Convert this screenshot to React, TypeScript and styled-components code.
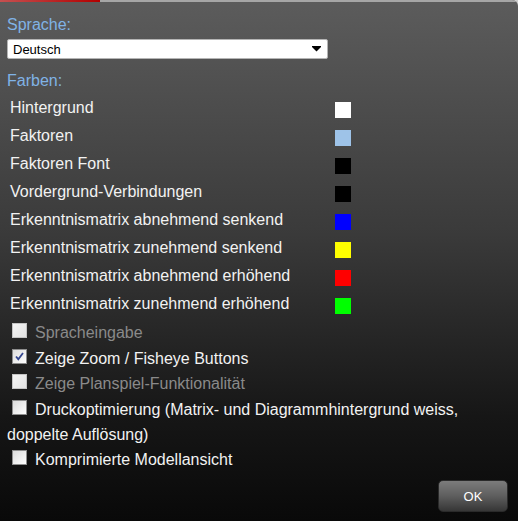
import React from 'react';
import styled, { createGlobalStyle } from 'styled-components';

const GlobalStyle = createGlobalStyle`
  html, body {
    margin: 0;
    padding: 0;
    background: #cfcfcf;
  }
  body {
    font-family: Arial, 'Liberation Sans', sans-serif;
  }
`;

const Panel = styled.div`
  width: 518px;
  height: 521px;
  display: flex;
  flex-direction: column;
  border-top-right-radius: 6px;
  overflow: hidden;
  background: linear-gradient(to bottom, #5c5c5c 0%, #3a3a3a 45%, #161616 80%, #090909 100%);
  color: #f2f2f2;
`;

const TopBar = styled.div`
  height: 2px;
  display: flex;
  background: #a6a6a6;
`;

const Progress = styled.div`
  width: 100px;
  background: linear-gradient(to right, #c55050, #b30000);
`;

const Content = styled.div`
  padding: 14px 7px 0 7px;
  display: flex;
  flex-direction: column;
`;

const SectionLabel = styled.div`
  font-size: 16px;
  line-height: 18px;
  color: #80b3e6;
  margin-bottom: 5px;
`;

const Select = styled.div`
  width: 321px;
  height: 20px;
  box-sizing: border-box;
  border: 1px solid #b4b4b4;
  border-radius: 2px;
  background: #fff;
  color: #000;
  font-size: 13px;
  display: flex;
  align-items: center;
  justify-content: space-between;
  padding: 0 6px 0 5px;
  margin-bottom: 13px;
`;

const ColorList = styled.div`
  display: flex;
  flex-direction: column;
  margin-top: -1px;
`;

const ColorRow = styled.div`
  display: grid;
  grid-template-columns: 325px 16px;
  height: 28px;
  line-height: 28px;
  font-size: 16px;
  padding-left: 3px;
`;

const Swatch = styled.span<{ $color: string }>`
  width: 16px;
  height: 16px;
  margin-top: 8px;
  background: ${(p) => p.$color};
`;

const Options = styled.div`
  margin-top: 2px;
  font-size: 16px;
  line-height: 25px;
`;

const Option = styled.div<{ $disabled?: boolean }>`
  margin-bottom: 0.5px;
  color: ${(p) => (p.$disabled ? '#8a8a8a' : '#f2f2f2')};
`;

const Box = styled.span<{ $disabled?: boolean }>`
  display: inline-block;
  width: 15px;
  height: 15px;
  box-sizing: border-box;
  margin: 0 8px 0 5px;
  vertical-align: baseline;
  border: 1px solid ${(p) => (p.$disabled ? '#c4c4c4' : '#8e8e8e')};
  background: ${(p) =>
    p.$disabled
      ? 'linear-gradient(135deg, #f4f4f4, #e2e2e2)'
      : 'linear-gradient(135deg, #dcdcdc, #ffffff)'};
  position: relative;

  svg {
    position: absolute;
    left: 1px;
    top: 1px;
  }
`;

const Footer = styled.div`
  margin-top: auto;
  display: flex;
  justify-content: flex-end;
  padding: 0 10px 9px 0;
`;

const OkButton = styled.button`
  width: 70px;
  height: 32px;
  border: 1px solid #2a2a2a;
  border-radius: 5px;
  background: linear-gradient(to bottom, #7c7c7c 0%, #5e5e5e 50%, #363636 100%);
  color: #fff;
  font-family: Arial, 'Liberation Sans', sans-serif;
  font-size: 13px;
  padding: 0;
`;

const colors = [
  { label: 'Hintergrund', color: '#ffffff' },
  { label: 'Faktoren', color: '#9ec3e8' },
  { label: 'Faktoren Font', color: '#000000' },
  { label: 'Vordergrund-Verbindungen', color: '#000000' },
  { label: 'Erkenntnismatrix abnehmend senkend', color: '#0000ff' },
  { label: 'Erkenntnismatrix zunehmend senkend', color: '#ffff00' },
  { label: 'Erkenntnismatrix abnehmend erhöhend', color: '#ff0000' },
  { label: 'Erkenntnismatrix zunehmend erhöhend', color: '#00ff00' },
];

const options = [
  { label: 'Spracheingabe', disabled: true, checked: false },
  { label: 'Zeige Zoom / Fisheye Buttons', disabled: false, checked: true },
  { label: 'Zeige Planspiel-Funktionalität', disabled: true, checked: false },
  {
    label: 'Druckoptimierung (Matrix- und Diagrammhintergrund weiss, doppelte Auflösung)',
    disabled: false,
    checked: false,
  },
  { label: 'Komprimierte Modellansicht', disabled: false, checked: false },
];

const Check = () => (
  <svg width="11" height="11" viewBox="0 0 11 11">
    <path d="M2 5.5 L4.3 8.2 L9 2" fill="none" stroke="#34468f" strokeWidth="1.8" />
  </svg>
);

export default function App() {
  return (
    <>
      <GlobalStyle />
      <Panel>
        <TopBar>
          <Progress />
        </TopBar>
        <Content>
          <SectionLabel>Sprache:</SectionLabel>
          <Select>
            <span>Deutsch</span>
            <svg width="9" height="6" viewBox="0 0 9 6">
              <path d="M0 0 H9 V1 L4.5 5.5 L0 1 Z" fill="#000" />
            </svg>
          </Select>
          <SectionLabel>Farben:</SectionLabel>
          <ColorList>
            {colors.map((c) => (
              <ColorRow key={c.label}>
                <span>{c.label}</span>
                <Swatch $color={c.color} />
              </ColorRow>
            ))}
          </ColorList>
          <Options>
            {options.map((o) => (
              <Option key={o.label} $disabled={o.disabled}>
                <Box $disabled={o.disabled}>{o.checked && <Check />}</Box>
                {o.label}
              </Option>
            ))}
          </Options>
        </Content>
        <Footer>
          <OkButton>OK</OkButton>
        </Footer>
      </Panel>
    </>
  );
}
